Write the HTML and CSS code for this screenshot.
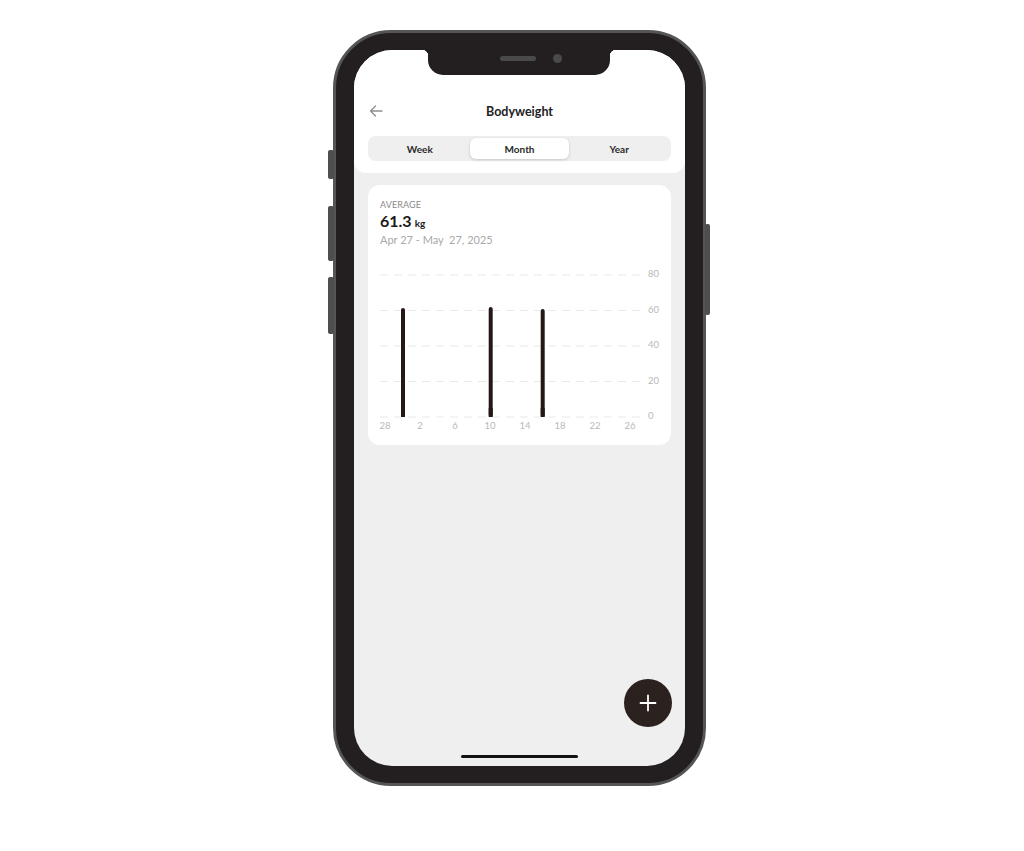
FILE: index.html
```html
<!DOCTYPE html>
<html lang="en">
<head>
<meta charset="utf-8">
<title>Bodyweight</title>
<link rel="stylesheet" href="styles.css">
</head>
<body>
<div class="stage">
  <div class="phone">
    <span class="btn btn-l1"></span>
    <span class="btn btn-l2"></span>
    <span class="btn btn-l3"></span>
    <span class="btn btn-r"></span>
    <div class="screen">
      <div class="notch"><span class="speaker"></span><span class="camera"></span></div>
      <header class="header">
        <div class="titlebar">
          <button class="back" aria-label="Back">
            <svg width="14" height="14" viewBox="0 0 14 14"><path d="M13 7H1.5M6.5 2L1.5 7l5 5" fill="none" stroke="#8e8e8e" stroke-width="1.3" stroke-linecap="round" stroke-linejoin="round"/></svg>
          </button>
          <h1 class="title">Bodyweight</h1>
          <span></span>
        </div>
        <div class="segments">
          <div class="seg">Week</div>
          <div class="seg seg-active">Month</div>
          <div class="seg">Year</div>
        </div>
      </header>
      <section class="card">
        <div class="summary">
          <div class="label">AVERAGE</div>
          <div class="value">61.3<span class="unit">kg</span></div>
          <div class="range">Apr 27 - May&nbsp; 27, 2025</div>
        </div>
        <svg class="chart" width="304" height="190" viewBox="0 0 304 190">
          <g stroke="#e9e9e9" stroke-width="1" stroke-dasharray="8 6">
            <line x1="12" y1="17" x2="272" y2="17"/>
            <line x1="12" y1="52.5" x2="272" y2="52.5"/>
            <line x1="12" y1="88" x2="272" y2="88"/>
            <line x1="12" y1="123.5" x2="272" y2="123.5"/>
            <line x1="12" y1="159" x2="272" y2="159"/>
          </g>
          <g class="ylab">
            <text x="280" y="17">80</text>
            <text x="280" y="53">60</text>
            <text x="280" y="88">40</text>
            <text x="280" y="124">20</text>
            <text x="280" y="159">0</text>
          </g>
          <g fill="#231815">
            <rect x="33" y="50" width="4" height="109" rx="2"/>
            <rect x="33" y="150" width="4" height="9"/>
            <rect x="120.7" y="49" width="4" height="110" rx="2"/>
            <rect x="120.7" y="150" width="4" height="9"/>
            <rect x="172.7" y="51" width="4" height="108" rx="2"/>
            <rect x="172.7" y="150" width="4" height="9"/>
          </g>
          <g class="xlab">
            <text x="17" y="169">28</text>
            <text x="52" y="169">2</text>
            <text x="87" y="169">6</text>
            <text x="122" y="169">10</text>
            <text x="157" y="169">14</text>
            <text x="192" y="169">18</text>
            <text x="227" y="169">22</text>
            <text x="262" y="169">26</text>
          </g>
        </svg>
      </section>
      <button class="fab" aria-label="Add">
        <svg width="18" height="18" viewBox="0 0 18 18"><path d="M9 1.5v15M1.5 9h15" stroke="#fff" stroke-width="1.8" stroke-linecap="round"/></svg>
      </button>
      <span class="home-indicator"></span>
    </div>
  </div>
</div>
</body>
</html>
```
FILE: styles.css
```css
* { box-sizing: border-box; }
html, body { margin: 0; padding: 0; background: #ffffff; }
body { font-family: Lato, "Open Sans", "Liberation Sans", sans-serif; color: #1e1e1e; }

.stage {
  width: 1024px;
  height: 851px;
  padding: 30px 0 0 333px;
}

.phone {
  position: relative;
  width: 373px;
  height: 756px;
  background: #231f20;
  border: 3px solid #555555;
  border-radius: 58px;
  padding: 17px 18px;
}

.btn {
  position: absolute;
  width: 6px;
  background: #4e4e4e;
  border-radius: 2px;
}
.btn-l1 { left: -8px; top: 117px; height: 29px; }
.btn-l2 { left: -8px; top: 173px; height: 55px; }
.btn-l3 { left: -8px; top: 244px; height: 57px; }
.btn-r { right: -7px; top: 191px; height: 91px; width: 5px; }

.screen {
  position: relative;
  width: 331px;
  height: 716px;
  background: #efefef;
  border-radius: 38px;
  overflow: hidden;
  display: flex;
  flex-direction: column;
}

.notch {
  position: absolute;
  top: 0;
  left: 74px;
  width: 182px;
  height: 25px;
  background: #231f20;
  border-radius: 0 0 15px 15px;
  display: flex;
  align-items: center;
  justify-content: center;
  gap: 17px;
  padding-left: 24px;
  padding-bottom: 8px;
}
.notch::before, .notch::after {
  content: "";
  position: absolute;
  top: 0;
  width: 6px;
  height: 6px;
}
.notch::before { left: -6px; background: radial-gradient(circle at 0 100%, transparent 6px, #231f20 6.5px); }
.notch::after { right: -6px; background: radial-gradient(circle at 100% 100%, transparent 6px, #231f20 6.5px); }
.speaker { width: 36px; height: 5px; border-radius: 3px; background: #4a4a4a; }
.camera { width: 9px; height: 9px; border-radius: 50%; background: #4a4a4a; }

.header {
  background: #ffffff;
  border-radius: 0 0 12px 12px;
  padding: 48px 14px 12px 14px;
}

.titlebar {
  display: grid;
  grid-template-columns: 1fr auto 1fr;
  align-items: center;
  height: 26px;
}
.back {
  justify-self: start;
  margin-left: 1px;
  padding: 0;
  border: 0;
  background: none;
  display: flex;
}
.title {
  margin: 0;
  font-size: 12.5px;
  font-weight: 700;
  color: #222;
}

.segments {
  margin-top: 12px;
  display: flex;
  background: #efefef;
  border-radius: 8px;
  padding: 2px;
  height: 25px;
}
.seg {
  flex: 1;
  display: flex;
  align-items: center;
  justify-content: center;
  font-size: 10px;
  font-weight: 700;
  color: #2a2a2a;
  border-radius: 6px;
}
.seg-active {
  background: #ffffff;
  box-shadow: 0 1px 3px rgba(0, 0, 0, 0.18);
}

.card {
  margin: 12px 14px 0 14px;
  background: #ffffff;
  border-radius: 12px;
  height: 260px;
}
.summary {
  padding: 14px 12px 0 12px;
  margin-bottom: 11px;
}
.label {
  font-size: 9px;
  line-height: 12px;
  color: #8a8a8a;
  letter-spacing: 0.1px;
}
.value {
  font-size: 16px;
  line-height: 19px;
  font-weight: 700;
  color: #1a1a1a;
}
.unit {
  font-size: 10px;
  margin-left: 3px;
}
.range {
  font-size: 11px;
  line-height: 14px;
  color: #a9a9a9;
}

.chart { display: block; }
.chart text {
  font-family: Lato, "Open Sans", "Liberation Sans", sans-serif;
  font-size: 9.5px;
  fill: #b9b9b9;
  dominant-baseline: middle;
}
.xlab text { text-anchor: middle; }

.fab {
  position: absolute;
  right: 13px;
  bottom: 39px;
  width: 48px;
  height: 48px;
  border-radius: 50%;
  border: 0;
  padding: 0;
  background: #2b211e;
  display: flex;
  align-items: center;
  justify-content: center;
}

.home-indicator {
  position: absolute;
  left: 107px;
  bottom: 8px;
  width: 117px;
  height: 3px;
  border-radius: 2px;
  background: #111111;
}
```
